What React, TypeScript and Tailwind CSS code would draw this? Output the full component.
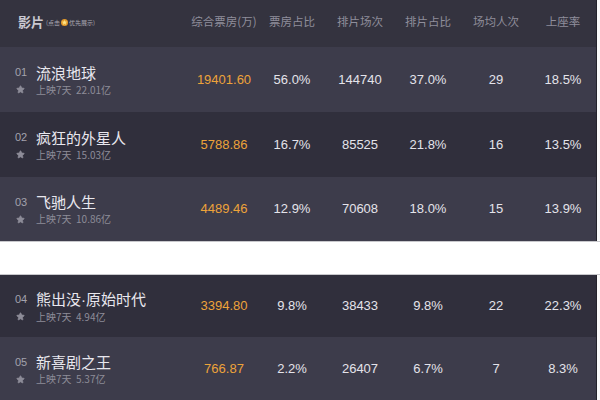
import { Star } from "lucide-react";

type Film = {
  idx: string;
  name: React.ReactNode;
  total: string;
  boxRate: string;
  shows: string;
  showRate: string;
  avg: string;
  seat: string;
  light: boolean;
};

const topFilms: Film[] = [
  { idx: "01", name: "流浪地球", total: "19401.60", boxRate: "56.0%", shows: "144740", showRate: "37.0%", avg: "29", seat: "18.5%", light: true },
  { idx: "02", name: "疯狂的外星人", total: "5788.86", boxRate: "16.7%", shows: "85525", showRate: "21.8%", avg: "16", seat: "13.5%", light: false },
  { idx: "03", name: "飞驰人生", total: "4489.46", boxRate: "12.9%", shows: "70608", showRate: "18.0%", avg: "15", seat: "13.9%", light: true },
];

const moreFilms: Film[] = [
  {
    idx: "04",
    name: (
      <>
        熊出没<span className="font-['Liberation_Sans',sans-serif]">·</span>原始时代
      </>
    ),
    total: "3394.80", boxRate: "9.8%", shows: "38433", showRate: "9.8%", avg: "22", seat: "22.3%", light: false,
  },
  { idx: "05", name: "新喜剧之王", total: "766.87", boxRate: "2.2%", shows: "26407", showRate: "6.7%", avg: "7", seat: "8.3%", light: true },
];

const sums: Record<string, string> = {
  "01": "22.01亿",
  "02": "15.03亿",
  "03": "10.86亿",
  "04": "4.94亿",
  "05": "5.37亿",
};

const cols = "grid grid-cols-[190px_68px_68px_68px_68px_68px_1fr] items-center";
const cjk = "font-['Noto_Sans_CJK_SC','Noto_Sans',sans-serif]";
const num = "font-['Liberation_Sans','Noto_Sans_CJK_SC',sans-serif]";

function Row({ film, h }: { film: Film; h: string }) {
  return (
    <div className={`${cols} ${h} ${film.light ? "bg-[#3d3c4b]" : "bg-[#302f3c]"}`}>
      <div className="flex flex-col pl-[15px]">
        <div className="flex items-center">
          <span className={`${num} w-[21px] text-[11px] text-[#a3a2ad]`}>{film.idx}</span>
          <span className={`${cjk} text-[15px] leading-[18px] text-[#e8e7ee]`}>{film.name}</span>
        </div>
        <div className="flex items-center mt-[2px]">
          <span className="w-[21px] pl-[1px]">
            <Star size={9} fill="#8d8c98" stroke="#8d8c98" />
          </span>
          <span className={`${cjk} text-[10px] leading-[12px] text-[#8d8c98]`}>
            上映7天&nbsp;&nbsp;{sums[film.idx]}
          </span>
        </div>
      </div>
      <div className={`${num} text-center text-[13px] text-[#eda33a]`}>{film.total}</div>
      <div className={`${num} text-center text-[13px] text-[#e4e3ea]`}>{film.boxRate}</div>
      <div className={`${num} text-center text-[13px] text-[#e4e3ea]`}>{film.shows}</div>
      <div className={`${num} text-center text-[13px] text-[#e4e3ea]`}>{film.showRate}</div>
      <div className={`${num} text-center text-[13px] text-[#e4e3ea]`}>{film.avg}</div>
      <div className={`${num} text-center text-[13px] text-[#e4e3ea]`}>{film.seat}</div>
    </div>
  );
}

export default function App() {
  const heads = ["综合票房(万)", "票房占比", "排片场次", "排片占比", "场均人次", "上座率"];
  return (
    <div className="w-[600px] h-[400px] overflow-hidden bg-[#fafafa]">
      <div className="w-[597px] border-r-[1px] border-[#24232c]">
        {/* header */}
        <div className={`${cols} h-[47px] pb-[4px] bg-[#34333f]`}>
          <div className="flex items-center pl-[18px]">
            <span className={`${cjk} text-[13px] font-bold text-[#c9c8d0]`}>影片</span>
            <span className={`${cjk} ml-[2px] mt-[2px] flex items-center text-[6px] text-[#a9a8b2]`}>
              (点击
              <span className="mx-[1px] inline-flex h-[7px] w-[7px] items-center justify-center rounded-full bg-[#e39a2a]">
                <Star size={5} fill="#fde68a" stroke="#fde68a" />
              </span>
              优先展示)
            </span>
          </div>
          {heads.map((t) => (
            <div key={t} className={`${cjk} whitespace-nowrap text-center text-[11.5px] text-[#8f8e9b]`}>
              {t}
            </div>
          ))}
        </div>
        <Row film={topFilms[0]} h="h-[65px]" />
        <Row film={topFilms[1]} h="h-[65px]" />
        <Row film={topFilms[2]} h="h-[64px]" />
      </div>
      <div className="h-[34px] border-t border-b border-[#c8c8cc] bg-white" />
      <div className="w-[597px] border-r-[1px] border-[#24232c]">
        <Row film={moreFilms[0]} h="h-[62px]" />
        <Row film={moreFilms[1]} h="h-[64px]" />
      </div>
    </div>
  );
}
